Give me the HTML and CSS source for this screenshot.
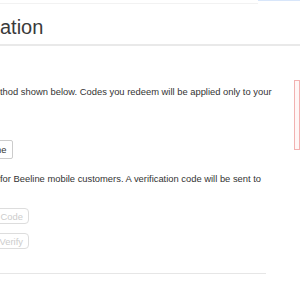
FILE: index.html
```html
<!DOCTYPE html>
<html lang="en">
  <head>
    <meta charset="UTF-8" />
    <meta name="viewport" content="width=device-width, initial-scale=1.0" />
    <title>Verification</title>
    <link rel="stylesheet" href="styles.css">
  </head>
  <body>
    <div class="topbar">
      <div class="topbar-line"></div>
      <div class="topbar-tab"></div>
    </div>

    <header class="page-header">
      <h1>ation</h1>
    </header>

    <div class="layout">
      <div class="main">
        <p class="intro">thod shown below. Codes you redeem will be applied only to your</p>
        <div class="methods">
          <button class="btn btn-phone">Phone</button>
        </div>
        <p class="note">for Beeline mobile customers. A verification code will be sent to</p>
        <div class="actions">
          <button class="btn btn-wide" disabled>Send Code</button>
          <button class="btn btn-wide" disabled>Verify</button>
        </div>
        <div class="rule"></div>
      </div>
      <aside class="alert"></aside>
    </div>
  </body>
</html>
```

FILE: styles.css
```css
* {
  margin: 0;
  padding: 0;
  box-sizing: border-box;
}
html,
body {
  width: 100%;
  height: 100%;
  background: #fff;
  font-family: "Liberation Sans", Arial, sans-serif;
  color: #333;
  overflow: hidden;
}
.topbar {
  display: flex;
  height: 4px;
}
.topbar-line {
  width: 258px;
  border-bottom: 1px solid #f2f2f2;
}
.topbar-tab {
  flex: 1;
  height: 1px;
  background: #d8e6fa;
}
.page-header {
  height: 42px;
  border-bottom: 2px solid #e9e9e9;
  padding-top: 11px;
}
.page-header h1 {
  font-size: 20px;
  font-weight: normal;
  line-height: 24px;
  color: #3a3a3a;
}
.layout {
  display: flex;
}
.main {
  width: 266px;
  padding-top: 40px;
}
.intro,
.note {
  font-size: 9.4px;
  line-height: 12px;
  white-space: nowrap;
}
.methods {
  margin-top: 42px;
}
.btn {
  display: block;
  font-family: "Liberation Sans", Arial, sans-serif;
  font-size: 9.4px;
  color: #333;
  background: #fff;
  border: 1px solid #ccc;
  border-radius: 2px;
}
.btn-phone {
  height: 19px;
  width: 40px;
  margin-left: -27px;
}
.note {
  margin-top: 14px;
}
.actions {
  margin-top: 23px;
  display: flex;
  flex-direction: column;
  gap: 9px;
}
.btn-wide {
  height: 16px;
  width: 60px;
  margin-left: -31px;
  color: #ccc;
  border-color: #ddd;
  border-radius: 4px;
  text-align: right;
  padding-right: 5px;
}
.rule {
  margin-top: 24px;
  border-top: 1px solid #e6e6e6;
}
.alert {
  margin-left: 28px;
  margin-top: 34px;
  width: 40px;
  height: 70px;
  background: #fff6f6;
  border: 1px solid #f3b1b1;
}
```
